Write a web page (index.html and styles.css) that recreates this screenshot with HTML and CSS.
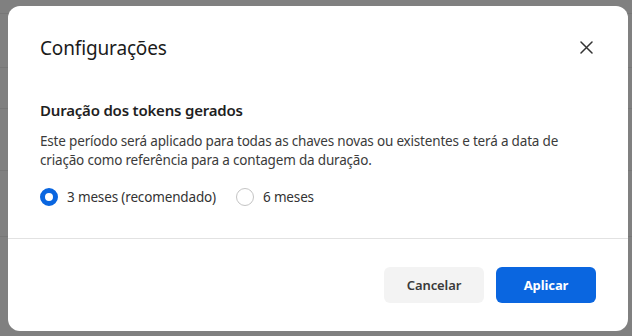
FILE: index.html
```html
<!DOCTYPE html>
<html lang="pt-BR">
<head>
<meta charset="utf-8">
<title>Configurações</title>
<link rel="stylesheet" href="styles.css">
</head>
<body>
<div class="backdrop">
  <div class="bg-lines">
    <div class="bg-line l1"></div>
    <div class="bg-line l2"></div>
    <div class="bg-line l3"></div>
    <div class="bg-line l4"></div>
    <div class="bg-line l5"></div>
  </div>
  <div class="dialog" role="dialog" aria-labelledby="dlg-title">
    <div class="dialog-header">
      <h2 id="dlg-title" class="dialog-title">Configurações</h2>
      <button class="close-btn" aria-label="Fechar">
        <svg width="13" height="13" viewBox="0 0 13 13" aria-hidden="true">
          <path d="M1 1 L12 12 M12 1 L1 12" stroke="#333" stroke-width="1.5" stroke-linecap="round" fill="none"/>
        </svg>
      </button>
    </div>
    <div class="dialog-body">
      <h3 class="section-title">Duração dos tokens gerados</h3>
      <p class="section-desc">Este período será aplicado para todas as chaves novas ou existentes e terá a data de criação como referência para a contagem da duração.</p>
      <div class="radio-group">
        <label class="radio">
          <span class="radio-circle checked"></span>
          <span class="radio-label">3 meses (recomendado)</span>
        </label>
        <label class="radio">
          <span class="radio-circle"></span>
          <span class="radio-label">6 meses</span>
        </label>
      </div>
    </div>
    <div class="dialog-footer">
      <button class="btn btn-secondary">Cancelar</button>
      <button class="btn btn-primary">Aplicar</button>
    </div>
  </div>
</div>
</body>
</html>
```
FILE: styles.css
```css
* { box-sizing: border-box; }
html, body {
  margin: 0;
  padding: 0;
  width: 632px;
  height: 336px;
  overflow: hidden;
}
body {
  font-family: "Noto Sans", "Open Sans", sans-serif;
  background: #808080;
}
.backdrop {
  position: relative;
  width: 632px;
  height: 336px;
  background: #808080;
  padding: 6px 4px 5px 8px;
}
.bg-lines {
  position: absolute;
  inset: 0;
}
.bg-line {
  position: absolute;
  left: 0;
  right: 0;
  height: 1px;
  background: #777;
}
.l1 { top: 13px; }
.l2 { top: 67px; }
.l3 { top: 108px; }
.l4 { top: 170px; }
.l5 { top: 236px; }
.dialog {
  position: relative;
  width: 620px;
  height: 325px;
  background: #fff;
  border-radius: 12px;
  display: flex;
  flex-direction: column;
  overflow: hidden;
}
.dialog-header {
  display: flex;
  align-items: center;
  justify-content: space-between;
  padding: 28px 32px 0 32px;
  height: 56px;
}
.dialog-title {
  margin: 0;
  font-size: 19px;
  line-height: 28px;
  letter-spacing: -0.15px;
  font-weight: 400;
  color: #1b1b1b;
}
.close-btn {
  border: 0;
  background: none;
  padding: 0;
  width: 20px;
  height: 20px;
  display: flex;
  align-items: center;
  justify-content: center;
  cursor: pointer;
  margin-top: -1px;
}
.dialog-body {
  padding: 36px 32px 0 32px;
  flex: 1;
}
.section-title {
  margin: 0;
  font-size: 15px;
  line-height: 24px;
  letter-spacing: -0.2px;
  font-weight: 600;
  color: #1f1f1f;
}
.section-desc {
  margin: 10px 0 0 0;
  font-size: 13.5px;
  line-height: 19px;
  letter-spacing: -0.18px;
  color: #3b3b3b;
}
.radio-group {
  display: flex;
  gap: 20px;
  margin-top: 17px;
}
.radio {
  display: flex;
  align-items: center;
  gap: 9px;
  font-size: 13.5px;
  line-height: 20px;
  letter-spacing: -0.15px;
  color: #333;
}
.radio-circle {
  width: 18px;
  height: 18px;
  border-radius: 50%;
  border: 1px solid #c4c4c4;
  background: #fff;
  flex: none;
}
.radio-circle.checked {
  border: 5px solid #0a66e0;
}
.dialog-footer {
  border-top: 1px solid #e2e2e2;
  padding: 28px 32px 28px 32px;
  display: flex;
  justify-content: flex-end;
  gap: 12px;
}
.btn {
  width: 100px;
  height: 36px;
  border: 0;
  border-radius: 6px;
  font-family: inherit;
  font-size: 13px;
  letter-spacing: -0.1px;
  font-weight: 600;
  cursor: pointer;
}
.btn-secondary {
  background: #f3f3f3;
  color: #3a3a3a;
}
.btn-primary {
  background: #0a66e0;
  color: #fff;
  font-weight: 700;
}
```
